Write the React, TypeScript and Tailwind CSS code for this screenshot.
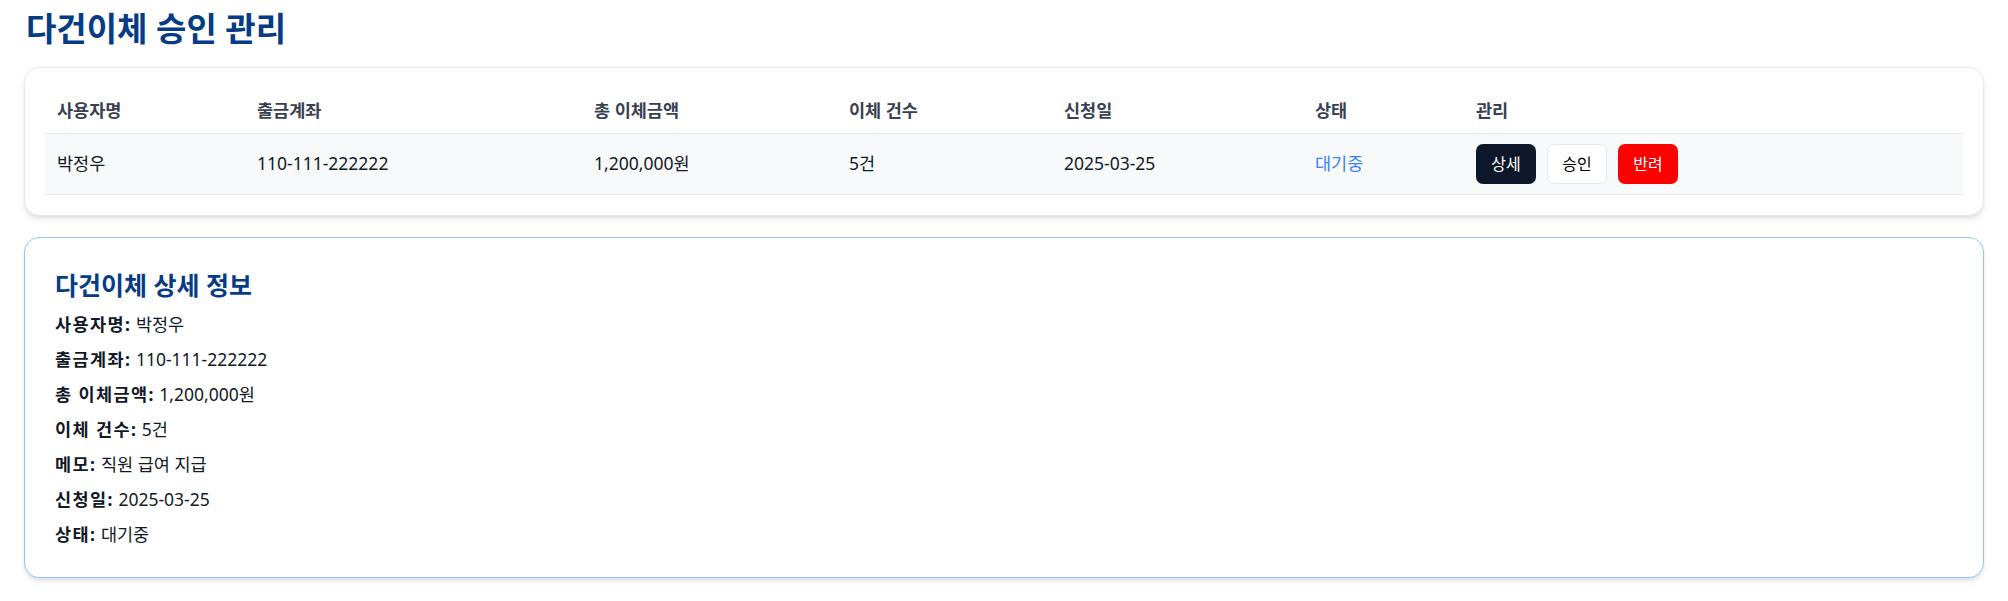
const rows = [
  { user: '박정우', account: '110-111-222222', amount: '1,200,000원', count: '5건', date: '2025-03-25', status: '대기중' },
];

const details = [
  ['사용자명', '박정우'],
  ['출금계좌', '110-111-222222'],
  ['총 이체금액', '1,200,000원'],
  ['이체 건수', '5건'],
  ['메모', '직원 급여 지급'],
  ['신청일', '2025-03-25'],
  ['상태', '대기중'],
];

const cols = [
  { label: '사용자명', w: 'w-[200px]' },
  { label: '출금계좌', w: 'w-[337px]' },
  { label: '총 이체금액', w: 'w-[255px]' },
  { label: '이체 건수', w: 'w-[215px]' },
  { label: '신청일', w: 'w-[251px]' },
  { label: '상태', w: 'w-[161px]' },
  { label: '관리', w: '' },
];

export default function App() {
  return (
    <div className="min-h-screen bg-white px-6 pt-[9px] font-['Noto_Sans','Noto_Sans_CJK_KR',sans-serif] text-[#111827]">
      <h1 className="mb-[18px] pl-[2px] text-[33px] font-bold leading-[40px] text-[#063b85]">다건이체 승인 관리</h1>

      {/* 목록 */}
      <div className="rounded-[15px] border border-gray-200 bg-white p-5 shadow-md">
        <table className="w-full table-fixed border-collapse text-left text-[17.5px]">
          <thead>
            <tr className="h-[45px] border-b border-gray-200">
              {cols.map((c) => (
                <th key={c.label} className={`${c.w} px-3 font-semibold text-[#374151]`}>{c.label}</th>
              ))}
            </tr>
          </thead>
          <tbody>
            {rows.map((r) => (
              <tr key={r.user} className="h-[61px] border-b border-gray-200 bg-[#f8f9fb]">
                <td className="px-3">{r.user}</td>
                <td className="px-3">{r.account}</td>
                <td className="px-3">{r.amount}</td>
                <td className="px-3">{r.count}</td>
                <td className="px-3">{r.date}</td>
                <td className="px-3 text-[#3b82f6]">{r.status}</td>
                <td className="px-3">
                  <div className="flex items-center gap-[11px]">
                    <button className="h-10 w-[60px] rounded-[7px] bg-[#0f172a] text-[16px] text-white">상세</button>
                    <button className="h-10 w-[60px] rounded-[7px] border border-gray-200 bg-white text-[16px] text-black">승인</button>
                    <button className="h-10 w-[60px] rounded-[7px] bg-[#ff0000] text-[16px] text-white">반려</button>
                  </div>
                </td>
              </tr>
            ))}
          </tbody>
        </table>
      </div>

      {/* 상세 정보 */}
      <div className="mt-[21px] rounded-[15px] border border-[#93c5fd] bg-white p-[30px] shadow-md">
        <h3 className="mb-[10px] text-[25px] font-bold leading-[34px] text-[#063b85]">다건이체 상세 정보</h3>
        <div className="flex flex-col gap-[10px] text-[17.5px] leading-[25px]">
          {details.map(([k, v]) => (
            <p key={k}>
              <span className="font-bold tracking-[1.4px]">{k}:</span> {v}
            </p>
          ))}
        </div>
      </div>
    </div>
  );
}
